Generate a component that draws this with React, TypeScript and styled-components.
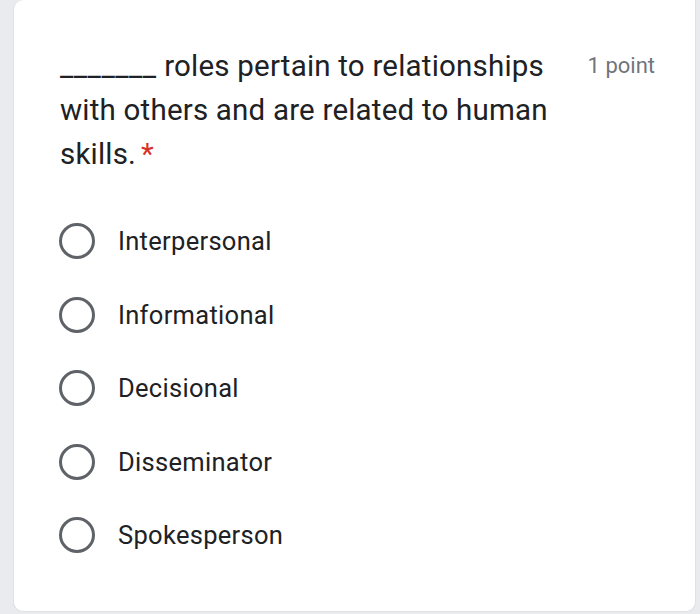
import React from "react";
import styled, { createGlobalStyle } from "styled-components";

const GlobalStyle = createGlobalStyle`
  html, body {
    margin: 0;
    padding: 0;
    background: #e9ebee;
  }
  * {
    box-sizing: border-box;
  }
`;

const Page = styled.div`
  width: 700px;
  height: 614px;
  padding: 0 4px 2px 13px;
  display: flex;
`;

const Card = styled.div`
  flex: 1;
  background: #ffffff;
  border: 1px solid #dfe1e5;
  border-top: none;
  border-radius: 0 0 10px 10px;
  border-top-left-radius: 10px;
  padding: 44px 40px 0 46px;
  font-family: Roboto, "Liberation Sans", sans-serif;
`;

const Header = styled.div`
  display: flex;
  align-items: flex-start;
  justify-content: space-between;
`;

const Title = styled.div`
  width: 515px;
  font-size: 29.5px;
  line-height: 44px;
  letter-spacing: 0.2px;
  color: #202124;
`;

const Blank = styled.span`
  letter-spacing: 0.5px;
`;

const Required = styled.span`
  color: #d93025;
  margin-left: 5px;
`;

const Points = styled.div`
  font-size: 22px;
  line-height: 44px;
  color: #70757a;
  white-space: nowrap;
`;

const Options = styled.div`
  display: flex;
  flex-direction: column;
  gap: 33.5px;
  margin-top: 45px;
`;

const Option = styled.label`
  display: flex;
  align-items: center;
  gap: 23px;
  height: 40px;
  font-size: 25.5px;
  letter-spacing: 0.3px;
  color: #202124;
`;

const Radio = styled.span`
  width: 36px;
  height: 36px;
  border-radius: 50%;
  border: 3.5px solid #5f6368;
  margin-left: -1px;
  flex-shrink: 0;
`;

const choices = [
  "Interpersonal",
  "Informational",
  "Decisional",
  "Disseminator",
  "Spokesperson",
];

export default function App() {
  return (
    <>
      <GlobalStyle />
      <Page>
        <Card>
          <Header>
            <Title>
              <Blank>_______</Blank> roles pertain to relationships with others
              and are related to human skills.<Required>*</Required>
            </Title>
            <Points>1 point</Points>
          </Header>
          <Options>
            {choices.map((c) => (
              <Option key={c}>
                <Radio />
                {c}
              </Option>
            ))}
          </Options>
        </Card>
      </Page>
    </>
  );
}
